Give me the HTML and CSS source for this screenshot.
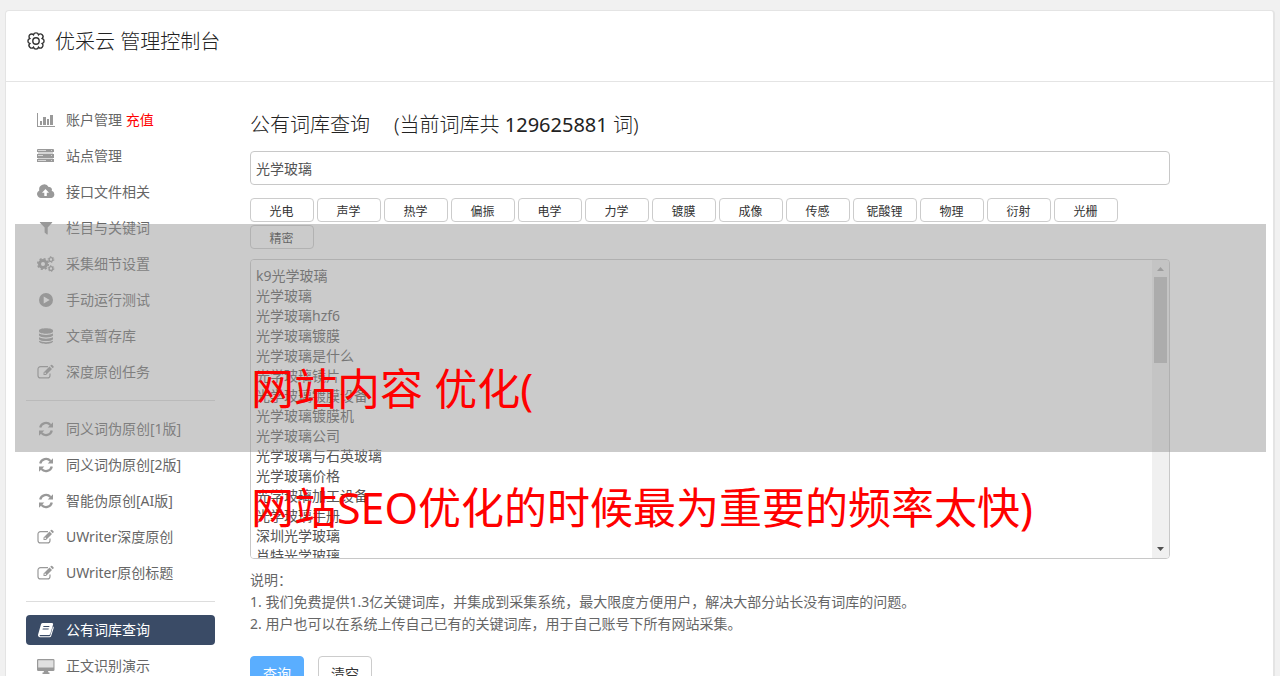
FILE: index.html
```html
<!DOCTYPE html>
<html lang="zh-CN">
<head>
    <meta charset="UTF-8">
    <meta name="viewport" content="width=device-width, initial-scale=1.0">
    <title>优采云 管理控制台</title>
    <link rel="stylesheet" href="styles.css">
</head>
<body>
    <!-- 图标 -->
    <svg class="icon-defs" aria-hidden="true">
        <symbol id="i-chart" viewBox="0 0 20 16">
            <path d="M1 1h1v13h17v1H1zM4 9h2v4H4zM7 5h3v8H7zM11 7h2v6h-2zM14 3h3v10h-3z"/>
        </symbol>
        <symbol id="i-server" viewBox="0 0 20 16">
            <path fill-opacity="0.4" d="M2 2h15v12H2z"/>
            <path fill-rule="evenodd" d="M2 1h15a1 1 0 0 1 1 1v2H1V2a1 1 0 0 1 1-1zM2 2v1h8V2zM15 2v1h1V2zM1 6h17v4H1zM2 7v1h5V7zM15 7v1h1V7zM1 11h17v3H1zM2 12v1h8v-1zM15 12v1h1v-1z"/>
        </symbol>
        <symbol id="i-cloud" viewBox="0 0 20 16">
            <path fill-rule="evenodd" d="M5 14a4 4 0 0 1-1.700-7.600A5 5 0 0 1 12.600 3a2.700 2.700 0 0 1 3.100 3.700A3.800 3.800 0 0 1 15.500 14zM9.500 5L6 8.700h2.300V12h2.500V8.700H13z"/>
        </symbol>
        <symbol id="i-filter" viewBox="0 0 20 16">
            <path d="M4.300 2h11.500q.9 0 .3.800L11.700 7.500v6.500q0 .8-.8.400L8.600 12.500v-5L4 2.800q-.6-.8.300-.8z"/>
        </symbol>
        <symbol id="i-gears" viewBox="0 0 20 16">
            <circle cx="7" cy="8" r="3.500" fill="none" stroke="currentColor" stroke-width="3"/>
            <circle cx="7" cy="8" r="5.300" fill="none" stroke="currentColor" stroke-width="1.600" stroke-dasharray="2.100 2.060"/>
            <circle cx="15" cy="3.500" r="1.900" fill="none" stroke="currentColor" stroke-width="1.400"/>
            <circle cx="15" cy="3.500" r="2.900" fill="none" stroke="currentColor" stroke-width="1" stroke-dasharray="1.500 1.530"/>
            <circle cx="15" cy="12.500" r="1.900" fill="none" stroke="currentColor" stroke-width="1.400"/>
            <circle cx="15" cy="12.500" r="2.900" fill="none" stroke="currentColor" stroke-width="1" stroke-dasharray="1.500 1.530"/>
        </symbol>
        <symbol id="i-play" viewBox="0 0 20 16">
            <path fill-rule="evenodd" d="M10 1a7 7 0 1 0 0 14a7 7 0 0 0 0-14zM7.700 4.500l6 3.500l-6 3.500z"/>
        </symbol>
        <symbol id="i-database" viewBox="0 0 20 16">
            <path d="M3 2.500C3-.5 17-.5 17 2.500v1C17 6.500 3 6.500 3 3.500zM3 5.500C6 7.400 14 7.400 17 5.500v2C16 10 4 10 3 7.500zM3 9.200c3 1.900 11 1.900 14 0v2c-1 2.500-13 2.500-14 0zM3 12.800c3 1.900 11 1.900 14 0v.8c-1 3.200-13 3.200-14 0z"/>
        </symbol>
        <symbol id="i-edit" viewBox="0 0 20 16">
            <path d="M12 2.600H4.500a2.500 2.500 0 0 0-2.500 2.500v6.300a2.500 2.500 0 0 0 2.500 2.500h7a2.500 2.500 0 0 0 2.500-2.500V9.500" fill="none" stroke="currentColor" stroke-width="1.200"/>
            <path fill-rule="evenodd" d="M7.500 8.500l6-6l2.500 2.500l-6 6H7.500zM8.500 9v1h1l.7-.7l-1.200-1zM14.200 1.800l.8-.8q.6-.5 1.200 0l1.300 1.300q.5.600 0 1.200l-.8.800z"/>
        </symbol>
        <symbol id="i-refresh" viewBox="0 0 20 16">
            <path d="M4.200 6.500A6 6 0 0 1 14.500 4M15.800 9.500A6 6 0 0 1 5.500 12" fill="none" stroke="currentColor" stroke-width="2.300"/>
            <path d="M17 1.200v5.300h-5.300zM3 14.800V9.500h5.300z"/>
        </symbol>
        <symbol id="i-book" viewBox="0 0 20 16">
            <path fill-rule="evenodd" d="M6.800 1H16q1.500.200 1.100 1.600L14.300 12q-.3 1-1.500 1H4.300q-.9 0-.7.700q.2.500.9.500h8.800q.8 0 1.100-.9L17 4.500q1 .3.700 1.400l-2.500 8.200q-.4 1.200-1.700 1.200H4.200q-1.500 0-2.100-1.500q-.2-.7 0-1.400L5 2.200Q5.500 1 6.800 1zM7.500 4l-.3 1h6l.3-1zM6.800 6.500l-.3 1h6l.3-1z"/>
        </symbol>
        <symbol id="i-desktop" viewBox="0 0 20 16">
            <path fill-opacity="0.3" d="M2 2h15v8H2z"/>
            <path fill-rule="evenodd" d="M2.300 1h14.900Q18.500 1 18.500 2.300v9.400q0 1.300-1.300 1.300H12l.5 1.500h1V16h-7v-1.500h1L8 13H2.300Q1 13 1 11.700V2.300Q1 1 2.300 1zM2.200 2.200v7.300h15.100V2.200z"/>
        </symbol>
    </svg>

    <div class="panel">
        <header class="panel-header">
            <svg class="logo" viewBox="-10 -10 20 20" aria-hidden="true">
                <path d="M-2.500-6.200a2.600 2.600 0 0 1 5 0a2.600 2.600 0 0 1 3.700 3.700a2.600 2.600 0 0 1 0 5a2.600 2.600 0 0 1-3.700 3.700a2.600 2.600 0 0 1-5 0a2.600 2.600 0 0 1-3.700-3.700a2.600 2.600 0 0 1 0-5a2.600 2.600 0 0 1 3.700-3.700z"/>
                <circle r="3.200"/>
            </svg>
            <h1>优采云 管理控制台</h1>
        </header>

        <div class="panel-body">
            <nav class="sidebar">
                <ul>
                    <li><a href="#"><svg><use href="#i-chart"/></svg><span>账户管理 <em>充值</em></span></a></li>
                    <li><a href="#"><svg><use href="#i-server"/></svg>站点管理</a></li>
                    <li><a href="#"><svg><use href="#i-cloud"/></svg>接口文件相关</a></li>
                    <li><a href="#"><svg><use href="#i-filter"/></svg>栏目与关键词</a></li>
                    <li><a href="#"><svg><use href="#i-gears"/></svg>采集细节设置</a></li>
                    <li><a href="#"><svg><use href="#i-play"/></svg>手动运行测试</a></li>
                    <li><a href="#"><svg><use href="#i-database"/></svg>文章暂存库</a></li>
                    <li><a href="#"><svg><use href="#i-edit"/></svg>深度原创任务</a></li>
                </ul>
                <ul>
                    <li><a href="#"><svg><use href="#i-refresh"/></svg>同义词伪原创[1版]</a></li>
                    <li><a href="#"><svg><use href="#i-refresh"/></svg>同义词伪原创[2版]</a></li>
                    <li><a href="#"><svg><use href="#i-refresh"/></svg>智能伪原创[AI版]</a></li>
                    <li><a href="#"><svg><use href="#i-edit"/></svg>UWriter深度原创</a></li>
                    <li><a href="#"><svg><use href="#i-edit"/></svg>UWriter原创标题</a></li>
                </ul>
                <ul>
                    <li><a href="#" class="active"><svg><use href="#i-book"/></svg>公有词库查询</a></li>
                    <li><a href="#"><svg><use href="#i-desktop"/></svg>正文识别演示</a></li>
                </ul>
            </nav>

            <main class="content">
                <h2><label for="keyword">公有词库查询</label><span>(当前词库共 <b>129625881</b> 词)</span></h2>
                <input type="text" id="keyword" class="keyword" value="光学玻璃">
                <div class="tags">
                    <button type="button">光电</button>
                    <button type="button">声学</button>
                    <button type="button">热学</button>
                    <button type="button">偏振</button>
                    <button type="button">电学</button>
                    <button type="button">力学</button>
                    <button type="button">镀膜</button>
                    <button type="button">成像</button>
                    <button type="button">传感</button>
                    <button type="button">铌酸锂</button>
                    <button type="button">物理</button>
                    <button type="button">衍射</button>
                    <button type="button">光栅</button>
                    <button type="button">精密</button>
                </div>
                <div class="result-box">
                    <textarea class="result" aria-label="查询结果">k9光学玻璃
光学玻璃
光学玻璃hzf6
光学玻璃镀膜
光学玻璃是什么
光学玻璃镜片
光学玻璃镀膜设备
光学玻璃镀膜机
光学玻璃公司
光学玻璃与石英玻璃
光学玻璃价格
光学玻璃加工设备
光学玻璃手册
深圳光学玻璃
肖特光学玻璃</textarea>
                    <div class="scrollbar" aria-hidden="true">
                        <svg viewBox="0 0 17 17"><path d="M5 11l3.500-4l3.500 4z"/></svg>
                        <div class="track"><div class="thumb"></div></div>
                        <svg class="down" viewBox="0 0 17 17"><path d="M5 6l3.500 4L12 6z"/></svg>
                    </div>
                </div>
                <div class="notes">
                    <p>说明：</p>
                    <p>1. 我们免费提供1.3亿关键词库，并集成到采集系统，最大限度方便用户，解决大部分站长没有词库的问题。</p>
                    <p>2. 用户也可以在系统上传自己已有的关键词库，用于自己账号下所有网站采集。</p>
                </div>
                <div class="actions">
                    <button type="button" class="btn btn-primary">查询</button>
                    <button type="button" class="btn">清空</button>
                </div>
            </main>
        </div>
    </div>

    <!-- 标题蒙层 -->
    <div class="caption">
        <p>网站内容 优化(</p>
        <p>网站SEO优化的时候最为重要的频率太快)</p>
    </div>
</body>
</html>
```

FILE: styles.css
```css
* {
    box-sizing: border-box;
}

body {
    position: relative;
    margin: 0;
    padding: 10px 5px;
    background: #f1f1f1;
    color: #666;
    font-family: "Noto Sans", "Noto Sans CJK SC", sans-serif;
    font-size: 14px;
    line-height: 20px;
}

h1, h2, p, ul {
    margin: 0;
    padding: 0;
}

button, input, textarea {
    font-family: inherit;
}

.icon-defs {
    display: none;
}

.panel {
    background: #fff;
    border: 1px solid #e4e4e4;
    border-right-width: 2px;
    border-radius: 4px;
}

.panel-header {
    display: flex;
    align-items: center;
    gap: 9px;
    height: 71px;
    padding: 0 20px 10px;
    border-bottom: 1px solid #e4e4e4;
}

.panel-header h1 {
    padding-top: 2px;
    color: #222;
    font-size: 20px;
    font-weight: 300;
    line-height: 30px;
}

.logo {
    width: 20px;
    height: 20px;
    fill: none;
    stroke: #333;
    stroke-width: 1.4;
}

.panel-body {
    display: flex;
    gap: 35px;
    padding: 23px 20px;
}

/* 左侧菜单 */
.sidebar {
    flex: 0 0 189px;
}

.sidebar ul {
    display: flex;
    flex-direction: column;
    gap: 6px;
    list-style: none;
}

.sidebar ul + ul {
    margin-top: 13px;
    padding-top: 13px;
    border-top: 1px solid #ddd;
}

.sidebar a {
    display: flex;
    align-items: center;
    gap: 10px;
    height: 30px;
    padding: 0 10px;
    border-radius: 4px;
    color: #666;
    text-decoration: none;
}

.sidebar svg {
    width: 20px;
    height: 16px;
    color: #999;
    fill: currentColor;
}

.sidebar em {
    color: #f00;
    font-style: normal;
}

.sidebar .active,
.sidebar .active svg {
    color: #fff;
}

.sidebar .active {
    background: #3a4b66;
}

/* 右侧内容 */
.content {
    flex: 1;
    max-width: 920px;
    padding-top: 5px;
}

.content h2 {
    display: flex;
    gap: 24px;
    color: #222;
    font-size: 20px;
    font-weight: 300;
    line-height: 30px;
}

.content h2 b {
    font-weight: 400;
}

.keyword {
    display: block;
    width: 100%;
    height: 34px;
    margin-top: 11px;
    padding: 0 5px;
    border: 1px solid #c8c8c8;
    border-radius: 4px;
    color: #555;
    font-size: 14px;
}

.tags {
    display: flex;
    flex-wrap: wrap;
    gap: 3px;
    margin: 13px 0 10px;
}

.tags button {
    width: 64px;
    height: 24px;
    padding: 2px 1px 0 0;
    background: #fff;
    border: 1px solid #ccc;
    border-radius: 4px;
    color: #333;
    font-size: 12px;
}

.result-box {
    display: flex;
    height: 300px;
    border: 1px solid #c8c8c8;
    border-radius: 4px;
    overflow: hidden;
}

.result {
    flex: 1;
    padding: 6px 5px;
    border: 0;
    color: #555;
    font-size: 14px;
    line-height: 20px;
    resize: none;
    overflow: hidden;
}

.scrollbar {
    display: flex;
    flex-direction: column;
    width: 17px;
    background: #f0f0f0;
}

.scrollbar svg {
    width: 17px;
    height: 17px;
    fill: #a3a3a3;
}

.scrollbar .down {
    fill: #505050;
}

.track {
    flex: 1;
    padding: 0 2px;
}

.thumb {
    height: 86px;
    background: #c1c1c1;
}

.notes {
    margin-top: 10px;
    line-height: 22px;
}

.actions {
    display: flex;
    gap: 14px;
    margin-top: 21px;
}

.btn {
    width: 54px;
    height: 34px;
    padding: 0;
    background: #fff;
    border: 1px solid #ccc;
    border-radius: 4px;
    color: #333;
    font-size: 14px;
}

.btn-primary {
    background: #5aaeff;
    border-color: #5aaeff;
    color: #fff;
}

/* 蒙层盖在页面上，文字超出灰色区域 */
.caption {
    position: absolute;
    top: 224px;
    left: 15px;
    right: 14px;
    height: 228px;
    padding: 105px 0 0 236px;
    background: rgba(151, 151, 151, 0.5);
    color: #f00;
    font-size: 43px;
    line-height: 119px;
    white-space: nowrap;
    pointer-events: none;
}
```
